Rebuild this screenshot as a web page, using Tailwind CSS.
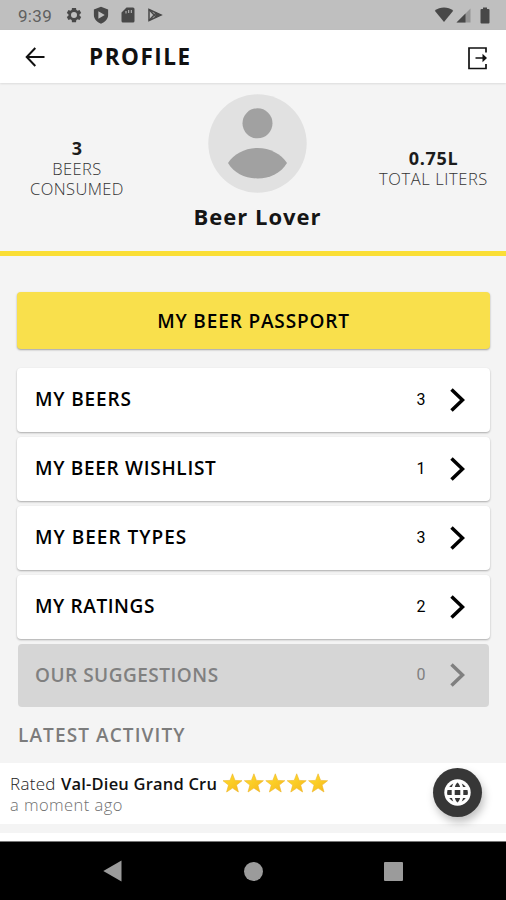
<!DOCTYPE html>
<html lang="en">
<head>
<meta charset="utf-8">
<title>Profile</title>
<script src="https://cdn.jsdelivr.net/npm/@tailwindcss/browser@4"></script>
</head>
<body class="w-[506px] h-[900px] overflow-hidden bg-[#f4f4f4] font-['Open_Sans','Noto_Sans',sans-serif] text-black flex flex-col">
  <div class="h-[30px] shrink-0 bg-[#bfbfbf] flex items-center text-[#484848] pl-[18px] pr-[16px]">
    <span class="font-['Roboto',sans-serif] text-[17px] leading-[20px] pt-px text-[#606060] w-[47px] tracking-[0.3px]">9:39</span>
    <svg class="w-[18px] h-[18px] ml-0" viewBox="0 0 24 24" fill="currentColor"><path d="M19.4 13a7 7 0 0 0 0-2l2.2-1.700-2.200-3.900-2.600 1a8 8 0 0 0-1.700-1L14.700 2.500H9.300L8.900 5.400a8 8 0 0 0-1.700 1l-2.600-1-2.200 3.900L4.600 11a7 7 0 0 0 0 2l-2.200 1.700 2.200 3.900 2.600-1a8 8 0 0 0 1.700 1l.4 2.900h5.400l.4-2.900a8 8 0 0 0 1.700-1l2.600 1 2.200-3.900zM12 16a4 4 0 1 1 0-8 4 4 0 0 1 0 8z"/></svg>
    <svg class="w-[18px] h-[18px] ml-[9px]" viewBox="0 0 24 24" fill="currentColor"><path fill-rule="evenodd" d="M12 1 2.500 4.500V12c0 5 4 9.500 9.500 11.500C17.500 21.500 21.500 17 21.500 12V4.500zM8.500 7v10l8.500-5z"/></svg>
    <svg class="w-[16px] h-[18px] ml-[10px]" viewBox="0 0 16 18" fill="currentColor"><path fill-rule="evenodd" d="M6.500 1.500H13A1.500 1.500 0 0 1 14.500 3v12A1.500 1.500 0 0 1 13 16.500H3A1.500 1.500 0 0 1 1.500 15V6.500zM5.500 5v2.500h1V5zm2.700-1v3h1V4zm2.600 0v3h1V4z"/></svg>
    <svg class="w-[16px] h-[16px] ml-[11px]" viewBox="0 0 16 16" fill="none" stroke="currentColor" stroke-width="1.500"><path d="M2 2.500v11L14 8z"/><path d="M2 2.500 9.500 10.500M2 13.500 9.500 5.500"/><path fill="currentColor" d="M9.500 5.800 14.500 8l-5 2.300L8 8z" stroke="none"/></svg>
    <div class="flex-1"></div>
    <svg class="w-[20px] h-[16px]" viewBox="0 0 20 16" fill="currentColor"><path d="M.8 3.800a14.500 14.500 0 0 1 18.400 0L10 15z"/></svg>
    <svg class="w-[15px] h-[15px] ml-[2px]" viewBox="0 0 15 15" fill="currentColor"><path d="M14.500.5v14H.5z" opacity=".35"/><path d="M9.500 5.500v9h-9z"/></svg>
    <svg class="w-[10px] h-[17px] ml-[9px]" viewBox="0 0 10 17" fill="currentColor"><path d="M3 .5h4V2h1.500A1 1 0 0 1 9.500 3v12.500a1 1 0 0 1-1 1h-7a1 1 0 0 1-1-1V3a1 1 0 0 1 1-1H3z"/></svg>
  </div>

  <header class="h-[53px] shrink-0 bg-white flex items-center pl-[25px] pr-[18px] shadow-[0_1px_2px_rgba(0,0,0,0.1)] z-10">
    <svg class="w-[21px] h-[20px] mt-[1px]" viewBox="0 0 21 20" fill="none" stroke="#111" stroke-width="2"><path d="M10.300 1 1.700 10l8.600 9M1.700 10H19.500"/></svg>
    <h1 class="ml-[43px] text-[22.500px] font-bold tracking-[1.5px] leading-[26px] text-[#111]">PROFILE</h1>
    <div class="flex-1"></div>
    <svg class="w-[21px] h-[24px] mt-[3px]" viewBox="0 0 21 24" fill="none" stroke="#111" stroke-width="1.700"><path d="M19 6.500V2H2v20.500h17V18M8.500 12h10"/><path d="M15.500 7.800 20 12l-4.500 4.200z" fill="#111" stroke="none"/></svg>
  </header>

  <section class="h-[173px] shrink-0 border-b-[5px] border-[#fade35] flex justify-between relative">
    <div class="w-[154px] pt-[55px] text-center leading-[20px]">
      <div class="text-[18px] leading-[21px] font-bold text-[#1c1c1c]">3</div>
      <div class="text-[16.500px] font-light text-[#333] tracking-[0.4px]">BEERS<br>CONSUMED</div>
    </div>
    <div class="pt-[11px] flex flex-col items-center">
      <svg class="w-[99px] h-[99px]" viewBox="0 0 99 99"><circle cx="49.500" cy="49.500" r="49.200" fill="#e1e1e1"/><g fill="#a1a1a1"><circle cx="49.500" cy="29.300" r="15"/><path d="M20 69C26 60 37 54 49.500 54S73 60 79 69C73 79 62 84.500 49.500 84.500S26 79 20 69z"/></g></svg>
      <div class="mt-[11px] text-[22px] leading-[24px] font-bold tracking-[1px] text-[#151515]">Beer Lover</div>
    </div>
    <div class="w-[145px] pt-[65px] text-center leading-[20px]">
      <div class="text-[18px] leading-[21px] font-bold text-[#1c1c1c] tracking-[0.7px]">0.75L</div>
      <div class="text-[16.500px] font-light text-[#333] tracking-[0.6px] whitespace-nowrap">TOTAL LITERS</div>
    </div>
  </section>

  <main class="pt-[36px] px-[17px] shrink-0">
    <button class="w-[473px] h-[57px] rounded-[4px] bg-[#f9e04c] shadow-[0_1px_2px_rgba(0,0,0,0.35)] flex items-center justify-center pt-px text-[19px] font-semibold tracking-[0.85px]"><span>MY BEER PASSPORT</span></button>
    <div class="mt-[18.500px] flex flex-col gap-[5px]">
      <div class="h-[64px] w-[473px] rounded-[4px] bg-white shadow-[0_1px_2px_rgba(0,0,0,0.3)] flex items-center pl-[18px] pr-[25px]"><span class="flex-1 text-[19px] font-semibold"><span class="tracking-[0.85px]">MY BEERS</span></span><span class="w-[10px] text-center text-[16px] font-['Roboto',sans-serif]">3</span><svg class="w-[15px] h-[24px] ml-[24px]" viewBox="0 0 15 24" fill="none" stroke="currentColor" stroke-width="3.500"><path d="M1.500 1.500 12.500 12 1.500 22.500"/></svg></div>
      <div class="h-[64px] w-[473px] rounded-[4px] bg-white shadow-[0_1px_2px_rgba(0,0,0,0.3)] flex items-center pl-[18px] pr-[25px]"><span class="flex-1 text-[19px] font-semibold"><span class="tracking-[0.7px]">MY BEER WISHLIST</span></span><span class="w-[10px] text-center text-[16px] font-['Roboto',sans-serif]">1</span><svg class="w-[15px] h-[24px] ml-[24px]" viewBox="0 0 15 24" fill="none" stroke="currentColor" stroke-width="3.500"><path d="M1.500 1.500 12.500 12 1.500 22.500"/></svg></div>
      <div class="h-[64px] w-[473px] rounded-[4px] bg-white shadow-[0_1px_2px_rgba(0,0,0,0.3)] flex items-center pl-[18px] pr-[25px]"><span class="flex-1 text-[19px] font-semibold"><span class="tracking-[1px]">MY BEER TYPES</span></span><span class="w-[10px] text-center text-[16px] font-['Roboto',sans-serif]">3</span><svg class="w-[15px] h-[24px] ml-[24px]" viewBox="0 0 15 24" fill="none" stroke="currentColor" stroke-width="3.500"><path d="M1.500 1.500 12.500 12 1.500 22.500"/></svg></div>
      <div class="h-[64px] w-[473px] rounded-[4px] bg-white shadow-[0_1px_2px_rgba(0,0,0,0.3)] flex items-center pl-[18px] pr-[25px]"><span class="flex-1 text-[19px] font-semibold"><span class="tracking-[0.6px]">MY RATINGS</span></span><span class="w-[10px] text-center text-[16px] font-['Roboto',sans-serif]">2</span><svg class="w-[15px] h-[24px] ml-[24px]" viewBox="0 0 15 24" fill="none" stroke="currentColor" stroke-width="3.500"><path d="M1.500 1.500 12.500 12 1.500 22.500"/></svg></div>
      <div class="h-[63px] w-[471px] ml-px rounded-[4px] bg-[#d6d6d6] text-[#808080] flex items-center pl-[17px] pr-[24px]"><span class="flex-1 text-[19px] font-semibold"><span class="tracking-[0.5px]">OUR SUGGESTIONS</span></span><span class="w-[10px] text-center text-[16px] font-['Roboto',sans-serif]">0</span><svg class="w-[15px] h-[24px] ml-[24px]" viewBox="0 0 15 24" fill="none" stroke="currentColor" stroke-width="3.500"><path d="M1.500 1.500 12.500 12 1.500 22.500"/></svg></div>
    </div>
    <h2 class="h-[56.500px] flex items-center pl-px pt-px text-[19px] font-semibold text-[#7c7c7c]"><span class="tracking-[1.1px]">LATEST ACTIVITY</span></h2>
  </main>

  <section class="h-[61px] shrink-0 bg-white pl-[10px] pt-[9px] leading-[21px] text-[17px] relative">
    <div class="flex items-center">
      <span class="font-light text-[#222] w-[51px] tracking-[0.3px]">Rated</span>
      <span class="font-semibold text-[#111] w-[161px] whitespace-nowrap text-[16.500px] tracking-[0.2px]">Val-Dieu Grand Cru</span>
      <svg class="w-[108px] h-[21px] mt-px" viewBox="0 0 108 21"><defs><linearGradient id="gold" x1="0" y1="0" x2="1" y2="1"><stop offset="0" stop-color="#ffe02e"/><stop offset="1" stop-color="#f6b61c"/></linearGradient><path id="star" d="M10.500.8l2.500 6.600 7 .3-5.500 4.400 1.900 6.900-5.900-3.900L4.600 19l1.900-6.900L1 7.700l7-.3z" fill="url(#gold)" stroke="#efb526" stroke-width=".6" stroke-linejoin="round"/></defs><use href="#star"/><use href="#star" x="21.400"/><use href="#star" x="42.800"/><use href="#star" x="64.200"/><use href="#star" x="85.600"/></svg>
    </div>
    <div class="text-[#707070] font-light text-[16.500px]"><span class="tracking-[0.45px]">a moment ago</span></div>
    <button class="absolute left-[433px] top-[5px] w-[49px] h-[49px] rounded-full bg-[#373737] shadow-[2px_5px_9px_rgba(0,0,0,0.25)] flex items-center justify-center z-10">
      <svg class="w-[27px] h-[27px]" viewBox="0 0 27 27"><circle cx="13.500" cy="13.500" r="13.200" fill="#fff"/><g fill="#373737"><path d="M10.700 11h5.600v5h-5.600zM3.500 11h4.200v5H3.500a9 9 0 0 1 0-5zM19.300 11h4.200a9 9 0 0 1 0 5h-4.200zM10.900 8c.5-2.100 1.500-3.800 2.600-4.400 1.100.6 2.100 2.300 2.600 4.400zM10.900 19c.5 2.100 1.500 3.800 2.600 4.400 1.100-.6 2.100-2.300 2.600-4.400zM5.200 8A10 10 0 0 1 9.300 4.600 13 13 0 0 0 8 8zM21.800 8a10 10 0 0 0-4.100-3.400A13 13 0 0 1 19 8zM5.200 19a10 10 0 0 0 4.100 3.400A13 13 0 0 1 8 19zM21.800 19a10 10 0 0 1-4.100 3.400A13 13 0 0 0 19 19z"/></g></svg>
    </button>
  </section>
  <div class="h-[9px] shrink-0 bg-[#f4f4f4]"></div>
  <div class="h-[8px] shrink-0 bg-white"></div>

  <nav class="flex-1 bg-black border-t border-[#777] relative flex items-center pl-[103px]">
    <svg class="w-[19px] h-[22px]" viewBox="0 0 19 22" fill="#9b9b9b"><path d="M18.500.5v21L.3 11z"/></svg>
    <div class="ml-[122px] w-[19px] h-[19px] rounded-full bg-[#9b9b9b]"></div>
    <div class="ml-[121px] w-[19px] h-[19px] rounded-[1px] bg-[#9b9b9b]"></div>
  </nav>
</body>
</html>
